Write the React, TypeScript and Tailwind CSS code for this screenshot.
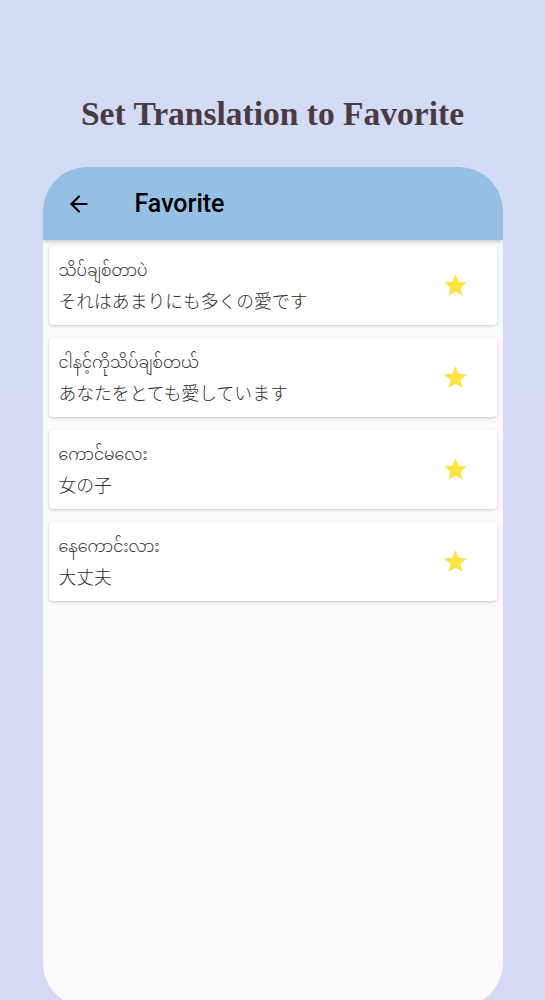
import { ArrowLeft } from 'lucide-react'

const ITEMS = [
    { my: 'သိပ်ချစ်တာပဲ', ja: 'それはあまりにも多くの愛です' },
    { my: 'ငါနင့်ကိုသိပ်ချစ်တယ်', ja: 'あなたをとても愛しています' },
    { my: 'ကောင်မလေး', ja: '女の子' },
    { my: 'နေကောင်းလား', ja: '大丈夫' },
]

const Star = () => (
    <svg viewBox="0 0 24 24" className="w-[27px] h-[27px]">
        <path
            d="M12 17.27 18.18 21l-1.64-7.03L22 9.24l-7.19-.61L12 2 9.19 8.63 2 9.24l5.46 4.73L5.82 21z"
            fill="#fde53f"
        />
    </svg>
)

export default function App() {
    return (
        <div className="w-[545px] h-[1000px] overflow-hidden bg-gradient-to-b from-[#d3dcf5] to-[#d6d9f4] flex flex-col items-center">
            <h1 className="mt-[94px] h-[40px] text-[33.5px] leading-[40px] font-bold text-[#4a3a44] font-['Liberation_Serif',serif] whitespace-nowrap">
                Set Translation to Favorite
            </h1>

            <div className="mt-[33px] w-[460px] h-[840px] rounded-[44px] bg-[#fafafc] overflow-hidden flex flex-col shrink-0">
                {/* App bar */}
                <div className="h-[73px] bg-[#95bfe3] flex items-center pl-[23px] shadow-[0_2px_4px_rgba(0,0,0,0.18)] relative z-10">
                    <ArrowLeft className="w-[26px] h-[26px] text-black" strokeWidth={2} />
                    <span className="ml-[43px] text-[25px] font-medium text-black font-['Roboto',sans-serif]">Favorite</span>
                </div>

                {/* List */}
                <div className="flex flex-col gap-[13px] px-[6px] pt-[6px]">
                    {ITEMS.map(item => (
                        <div
                            key={item.ja}
                            className="h-[79px] bg-white rounded-[4px] shadow-[0_1px_3px_rgba(0,0,0,0.2)] flex items-center pl-[10px] pr-[28px]"
                        >
                            <div className="flex-1 flex flex-col gap-[3px] pt-[2px] text-[#333] font-['Noto_Sans_Myanmar','Padauk','Noto_Sans','Noto_Sans_CJK_JP',sans-serif]">
                                <span className="text-[16px] leading-[24px] font-light">{item.my}</span>
                                <span className="text-[17.8px] leading-[25px] font-light text-[#2e2e2e] font-['Noto_Sans_CJK_JP',sans-serif]">{item.ja}</span>
                            </div>
                            <Star />
                        </div>
                    ))}
                </div>
            </div>
        </div>
    )
}
